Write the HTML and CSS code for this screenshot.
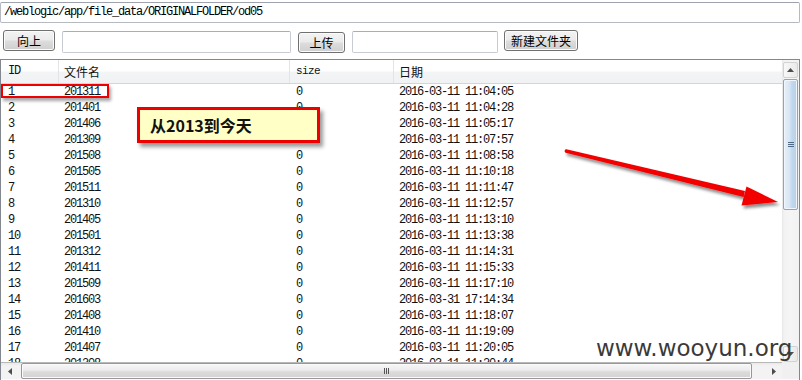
FILE: index.html
```html
<!DOCTYPE html>
<html lang="zh">
<head>
<meta charset="utf-8">
<title>file_data</title>
<link rel="stylesheet" href="styles.css">
</head>
<body>
<div class="page">
  <div class="path">/weblogic/app/file_data/ORIGINALFOLDER/od05</div>
  <div class="toolbar">
    <button class="btn btn-up">向上</button>
    <div class="field field-a"></div>
    <button class="btn btn-upload">上传</button>
    <div class="field field-b"></div>
    <button class="btn btn-new">新建文件夹</button>
  </div>
  <div class="list">
    <div class="viewport">
      <div class="row head">
        <div class="c c1 cjk">ID</div>
        <div class="c c2 cjk">文件名</div>
        <div class="c c3 sz">size</div>
        <div class="c c4 cjk">日期</div>
      </div>
      <div class="row"><div class="c c1">1</div><div class="c c2">201311</div><div class="c c3">0</div><div class="c c4">2016-03-11 11:04:05</div></div>
      <div class="row"><div class="c c1">2</div><div class="c c2">201401</div><div class="c c3">0</div><div class="c c4">2016-03-11 11:04:28</div></div>
      <div class="row"><div class="c c1">3</div><div class="c c2">201406</div><div class="c c3">0</div><div class="c c4">2016-03-11 11:05:17</div></div>
      <div class="row"><div class="c c1">4</div><div class="c c2">201309</div><div class="c c3">0</div><div class="c c4">2016-03-11 11:07:57</div></div>
      <div class="row"><div class="c c1">5</div><div class="c c2">201508</div><div class="c c3">0</div><div class="c c4">2016-03-11 11:08:58</div></div>
      <div class="row"><div class="c c1">6</div><div class="c c2">201505</div><div class="c c3">0</div><div class="c c4">2016-03-11 11:10:18</div></div>
      <div class="row"><div class="c c1">7</div><div class="c c2">201511</div><div class="c c3">0</div><div class="c c4">2016-03-11 11:11:47</div></div>
      <div class="row"><div class="c c1">8</div><div class="c c2">201310</div><div class="c c3">0</div><div class="c c4">2016-03-11 11:12:57</div></div>
      <div class="row"><div class="c c1">9</div><div class="c c2">201405</div><div class="c c3">0</div><div class="c c4">2016-03-11 11:13:10</div></div>
      <div class="row"><div class="c c1">10</div><div class="c c2">201501</div><div class="c c3">0</div><div class="c c4">2016-03-11 11:13:38</div></div>
      <div class="row"><div class="c c1">11</div><div class="c c2">201312</div><div class="c c3">0</div><div class="c c4">2016-03-11 11:14:31</div></div>
      <div class="row"><div class="c c1">12</div><div class="c c2">201411</div><div class="c c3">0</div><div class="c c4">2016-03-11 11:15:33</div></div>
      <div class="row"><div class="c c1">13</div><div class="c c2">201509</div><div class="c c3">0</div><div class="c c4">2016-03-11 11:17:10</div></div>
      <div class="row"><div class="c c1">14</div><div class="c c2">201603</div><div class="c c3">0</div><div class="c c4">2016-03-31 17:14:34</div></div>
      <div class="row"><div class="c c1">15</div><div class="c c2">201408</div><div class="c c3">0</div><div class="c c4">2016-03-11 11:18:07</div></div>
      <div class="row"><div class="c c1">16</div><div class="c c2">201410</div><div class="c c3">0</div><div class="c c4">2016-03-11 11:19:09</div></div>
      <div class="row"><div class="c c1">17</div><div class="c c2">201407</div><div class="c c3">0</div><div class="c c4">2016-03-11 11:20:05</div></div>
      <div class="row"><div class="c c1">18</div><div class="c c2">201308</div><div class="c c3">0</div><div class="c c4">2016-03-11 11:20:44</div></div>
    </div>
    <div class="vscroll">
      <div class="sb-btn"><svg width="7" height="4" viewBox="0 0 7 4"><path d="M0 4 L3.5 0 L7 4 Z" fill="#4d4d4d"/></svg></div>
      <div class="vthumb"><span class="grip-v"></span></div>
      <div class="vtrack"></div>
      <div class="sb-btn"><svg width="7" height="4" viewBox="0 0 7 4"><path d="M0 0 L3.5 4 L7 0 Z" fill="#4d4d4d"/></svg></div>
    </div>
    <div class="hscroll">
      <div class="sb-btn hb"><svg width="4" height="7" viewBox="0 0 4 7"><path d="M4 0 L0 3.5 L4 7 Z" fill="#4d4d4d"/></svg></div>
      <div class="hthumb"><span class="grip-h"></span></div>
      <div class="htrack"></div>
      <div class="sb-btn hb"><svg width="4" height="7" viewBox="0 0 4 7"><path d="M0 0 L4 3.5 L0 7 Z" fill="#4d4d4d"/></svg></div>
    </div>
    <div class="corner"></div>
  </div>

  <div class="mark-row"></div>
  <div class="callout">从2013到今天</div>
  <svg class="arrow" width="802" height="380" viewBox="0 0 802 380">
    <defs>
      <filter id="sh" x="-10%" y="-50%" width="130%" height="200%">
        <feDropShadow dx="2" dy="3" stdDeviation="1.6" flood-color="#000" flood-opacity="0.45"/>
      </filter>
    </defs>
    <g filter="url(#sh)" fill="#f20000">
      <path d="M566.4 149.3 L745 191 L743.6 197 L565.6 152.7 A1.8 1.8 0 0 1 566.4 149.3 Z"/>
      <path d="M746.5 186.5 L778 202 L741.5 205.5 Z"/>
    </g>
  </svg>
  <div class="watermark">www.wooyun.org</div>
</div>
</body>
</html>
```

FILE: styles.css
```css
* { box-sizing: border-box; }

html, body {
  margin: 0;
  padding: 0;
  background: #ffffff;
}

.page {
  position: relative;
  width: 802px;
  height: 380px;
  overflow: hidden;
  font-family: "Liberation Mono", "Noto Sans CJK SC", monospace;
  color: #000;
}

.path {
  margin: 2px 2px 0 0;
  height: 21px;
  border: 1px solid #b5b9c2;
  border-top-color: #9ea3ad;
  border-radius: 2px;
  padding: 0 0 0 3px;
  font-size: 12px;
  letter-spacing: -1.2px;
  line-height: 19px;
  white-space: nowrap;
}

.toolbar {
  display: flex;
  align-items: flex-start;
  margin-top: 7px;
  padding-left: 3px;
  height: 29px;
}

.btn {
  height: 21px;
  margin: 0 7px 0 0;
  padding: 0;
  border: 1px solid #707070;
  border-radius: 3px;
  background: linear-gradient(#f3f3f3 0%, #ebebeb 48%, #dddddd 52%, #cfcfcf 100%);
  box-shadow: inset 0 0 0 1px #fbfbfb;
  font-family: "Noto Sans CJK SC", sans-serif;
  font-size: 12px;
  line-height: 18px;
  color: #000;
  text-align: center;
}

.btn-up { width: 52px; }
.btn-upload { width: 47px; margin-top: 2px; }
.btn-new { width: 74px; }

.field {
  height: 22px;
  margin: 1px 7px 0 0;
  border: 1px solid #c8ccd2;
  border-top-color: #abadb3;
  border-radius: 2px;
  background: #fff;
}

.field-a { width: 229px; }
.field-b { width: 146px; margin-right: 6px; }

.list {
  width: 800px;
  height: 322px;
  border: 1px solid #828790;
  display: grid;
  grid-template-columns: 781px 17px;
  grid-template-rows: 302px 17px;
  background: #fff;
}

.viewport {
  overflow: hidden;
}

.row {
  display: grid;
  grid-template-columns: 58px 231px 104px 1fr;
  height: 16px;
  font-size: 12px;
  letter-spacing: -1.2px;
  line-height: 16px;
  white-space: nowrap;
  color: #111;
}

.c1 { padding-left: 7px; }
.c2 { padding-left: 5px; }
.c3 { padding-left: 6px; }
.c4 { padding-left: 5px; }

.head {
  height: 24px;
  line-height: 23px;
  background: linear-gradient(#ffffff 0%, #ffffff 48%, #f3f4f6 52%, #f1f2f4 100%);
  border-bottom: 1px solid #d5d5d5;
}

.head .c {
  border-right: 1px solid #e3e4e6;
}

.head .c4 { border-right: none; }

.head .cjk {
  font-family: "Noto Sans CJK SC", sans-serif;
  font-size: 12px;
  letter-spacing: 0;
}

.head .c1 {
  font-family: "Liberation Mono", monospace;
  font-size: 12px;
  letter-spacing: -1.2px;
}

.head .sz {
  font-size: 11px;
  letter-spacing: -0.6px;
}

.vscroll {
  display: flex;
  flex-direction: column;
  background: linear-gradient(90deg, #e7e7e7 0, #f2f2f2 2px, #f5f5f5 50%, #f2f2f2 100%);
  padding: 2px 1px 0 1px;
}

.sb-btn {
  width: 15px;
  height: 16px;
  border: 1px solid #d2d2d2;
  border-radius: 2px;
  background: linear-gradient(90deg, #f8f8f8, #e9e9e9);
  display: flex;
  align-items: center;
  justify-content: center;
}

.vthumb {
  height: 131px;
  margin-top: 1px;
  border: 1px solid #8aa5c0;
  border-radius: 2px;
  background: linear-gradient(90deg, #e6eff8 0%, #d8e7f4 40%, #c2d8ec 60%, #b8d0e6 100%);
  box-shadow: inset 0 0 0 1px #f0f6fc;
  display: flex;
  align-items: center;
  justify-content: center;
}

.grip-v {
  width: 6px;
  height: 5px;
  background: repeating-linear-gradient(#4f6a86 0 1px, transparent 1px 2px);
}

.vtrack { flex: 1; }

.hscroll {
  display: flex;
  align-items: stretch;
  border-top: 1px solid #b9b9b9;
  background: linear-gradient(#e9e9e9 0, #f3f3f3 3px, #f3f3f3 100%);
  padding: 0 0 0 1px;
}

.hb {
  width: 16px;
  height: 16px;
  border: none;
  background: transparent;
}

.hthumb {
  width: 731px;
  margin-left: 3px;
  border: 1px solid #979797;
  border-radius: 2px;
  background: linear-gradient(#f7f7f7 0%, #ececec 45%, #dcdcdc 55%, #d2d2d2 100%);
  box-shadow: inset 0 0 0 1px #fbfbfb;
  display: flex;
  align-items: center;
  justify-content: center;
}

.grip-h {
  width: 5px;
  height: 6px;
  background: repeating-linear-gradient(90deg, #555 0 1px, transparent 1px 2px);
}

.htrack { flex: 1; }

.corner {
  background: #f0f0f0;
}

.mark-row {
  position: absolute;
  left: 1px;
  top: 84px;
  width: 108px;
  height: 14px;
  border: 2px solid #ee0000;
  box-shadow: 2px 3px 3px rgba(0, 0, 0, 0.35);
}

.callout {
  position: absolute;
  left: 137px;
  top: 107px;
  width: 183px;
  height: 36px;
  border: 3px solid #ee0000;
  background: #ffffc6;
  box-shadow: 3px 4px 4px rgba(0, 0, 0, 0.4);
  padding-left: 10px;
  font-family: "Noto Sans CJK SC", sans-serif;
  font-weight: 700;
  font-size: 16px;
  line-height: 30px;
  color: #111;
  white-space: nowrap;
}

.arrow {
  position: absolute;
  left: 0;
  top: 0;
  pointer-events: none;
}

.watermark {
  position: absolute;
  left: 596px;
  top: 333px;
  font-family: "DejaVu Sans", sans-serif;
  font-size: 23px;
  line-height: 30px;
  color: #3a3a3a;
  white-space: nowrap;
}
```
